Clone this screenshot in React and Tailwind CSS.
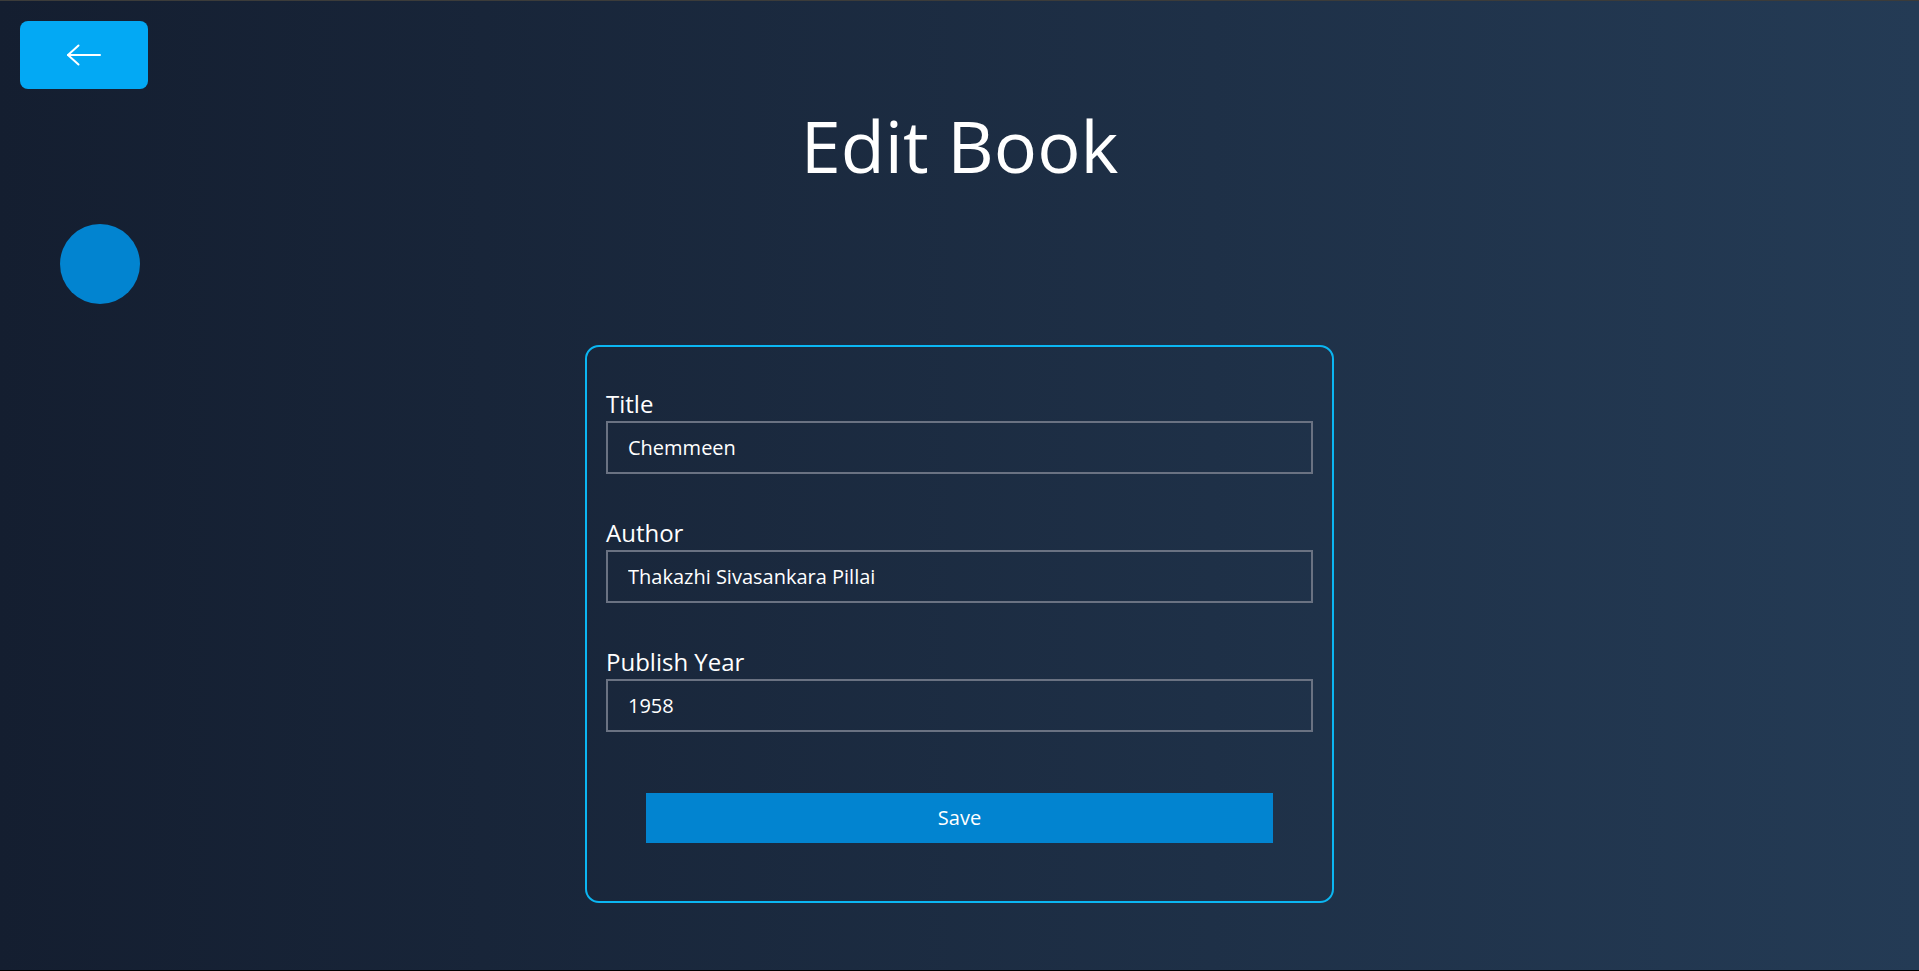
import React, { useState } from 'react';

function BackArrow() {
  return (
    <svg width="36" height="22" viewBox="0 0 36 22" fill="none" stroke="white" strokeWidth="2" strokeLinecap="round" strokeLinejoin="round">
      <path d="M34 11H2" />
      <path d="M12.5 1.5L2 11l10.5 9.5" />
    </svg>
  );
}

function Field({ label, value, onChange }) {
  return (
    <div className="flex flex-col">
      <label className="text-2xl leading-8 text-white">{label}</label>
      <input
        type="text"
        value={value}
        onChange={e => onChange(e.target.value)}
        className="mt-px h-[53px] w-full border-2 border-gray-500 bg-transparent px-5 text-xl text-white outline-none"
      />
    </div>
  );
}

export default function App() {
  const [title, setTitle] = useState('Chemmeen');
  const [author, setAuthor] = useState('Thakazhi Sivasankara Pillai');
  const [year, setYear] = useState('1958');

  return (
    <div className="h-[971px] overflow-hidden border-t border-b border-t-[#3c3c3a] border-b-black bg-linear-to-r from-[#141E30] to-[#243B55] p-5 font-['Open_Sans',sans-serif] text-white">
      <button className="flex h-[68px] w-32 items-center justify-center rounded-lg bg-[#03a9f4]">
        <BackArrow />
      </button>

      <h1 className="mt-5 text-center text-7xl leading-[72px]">Edit Book</h1>

      <div className="ml-10 mt-[43px] h-20 w-20 rounded-full bg-[#0284d0]" />

      <div className="mx-auto mt-[41px] flex w-[749px] flex-col gap-[43px] rounded-[14px] border-2 border-[#0bb6f2] px-[19px] pb-[58px] pt-[41px]">
        <Field label="Title" value={title} onChange={setTitle} />
        <Field label="Author" value={author} onChange={setAuthor} />
        <Field label="Publish Year" value={year} onChange={setYear} />
        <button className="mx-10 mt-[18px] h-[50px] bg-[#0284d0] text-xl text-white">Save</button>
      </div>
    </div>
  );
}
